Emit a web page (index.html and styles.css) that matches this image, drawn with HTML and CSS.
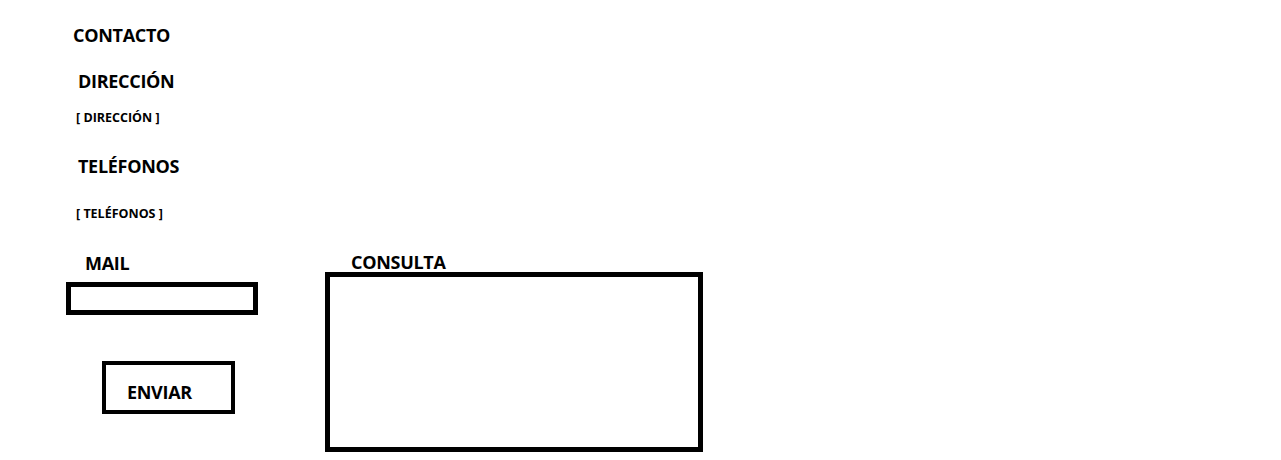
FILE: index.html
```html
<!DOCTYPE html>
<html lang="es">
  <head>
    <meta charset="UTF-8">
    <title>Contacto</title>
    <link rel="stylesheet" href="styles.css">
  </head>
  <body>
    <div class="page">
      <h1 class="title">CONTACTO</h1>
      <h2 class="heading heading-dir">DIRECCIÓN</h2>
      <p class="placeholder">[ DIRECCIÓN ]</p>
      <h2 class="heading heading-tel">TELÉFONOS</h2>
      <p class="placeholder placeholder-tel">[ TELÉFONOS ]</p>

      <form class="form">
        <div class="form-left">
          <label class="label label-mail" for="mail">MAIL</label>
          <input id="mail" class="mail-box" type="text">
          <button class="send-button" type="button">ENVIAR</button>
        </div>
        <div class="form-right">
          <label class="label label-query" for="query">CONSULTA</label>
          <textarea id="query" class="query-box"></textarea>
        </div>
      </form>
    </div>
  </body>
</html>
```

FILE: styles.css
```css
:root {
  font-family: "Open Sans", sans-serif;
  color: #000;
}

body {
  margin: 0;
  background-color: #fff;
}

.page {
  padding: 24px 0 0 66px;
}

.title,
.heading,
.label {
  margin: 0;
  font-size: 18px;
  font-weight: 700;
  line-height: 22px;
  letter-spacing: -0.3px;
}

.title {
  margin-left: 7px;
}

.heading {
  margin-left: 12px;
}
.heading-dir {
  margin-top: 24px;
}
.heading-tel {
  margin-top: 29px;
}

.placeholder {
  margin: 18px 0 0 10px;
  font-size: 12.5px;
  font-weight: 700;
  line-height: 16px;
}
.placeholder-tel {
  margin-top: 29px;
}

.form {
  display: flex;
  gap: 67px;
  margin-top: 30px;
}

.form-left,
.form-right {
  display: flex;
  flex-direction: column;
  align-items: flex-start;
}

.label-mail {
  margin-left: 19px;
}
.label-query {
  margin-left: 26px;
  line-height: 20px;
}

.mail-box {
  box-sizing: border-box;
  width: 192px;
  height: 33px;
  margin-top: 8px;
  border: 5px solid #000;
  border-radius: 0;
  padding: 0 6px;
  font: inherit;
  outline: none;
}

.send-button {
  box-sizing: border-box;
  width: 133px;
  height: 53px;
  margin: 46px 0 0 36px;
  border: 4px solid #000;
  border-radius: 0;
  background-color: #fff;
  padding: 8px 0 0 21px;
  text-align: left;
  font: inherit;
  font-size: 18px;
  font-weight: 700;
  letter-spacing: -0.3px;
  color: #000;
}

.query-box {
  box-sizing: border-box;
  width: 378px;
  height: 180px;
  margin-top: 0;
  border: 5px solid #000;
  border-radius: 0;
  resize: none;
  outline: none;
  font: inherit;
}
```
